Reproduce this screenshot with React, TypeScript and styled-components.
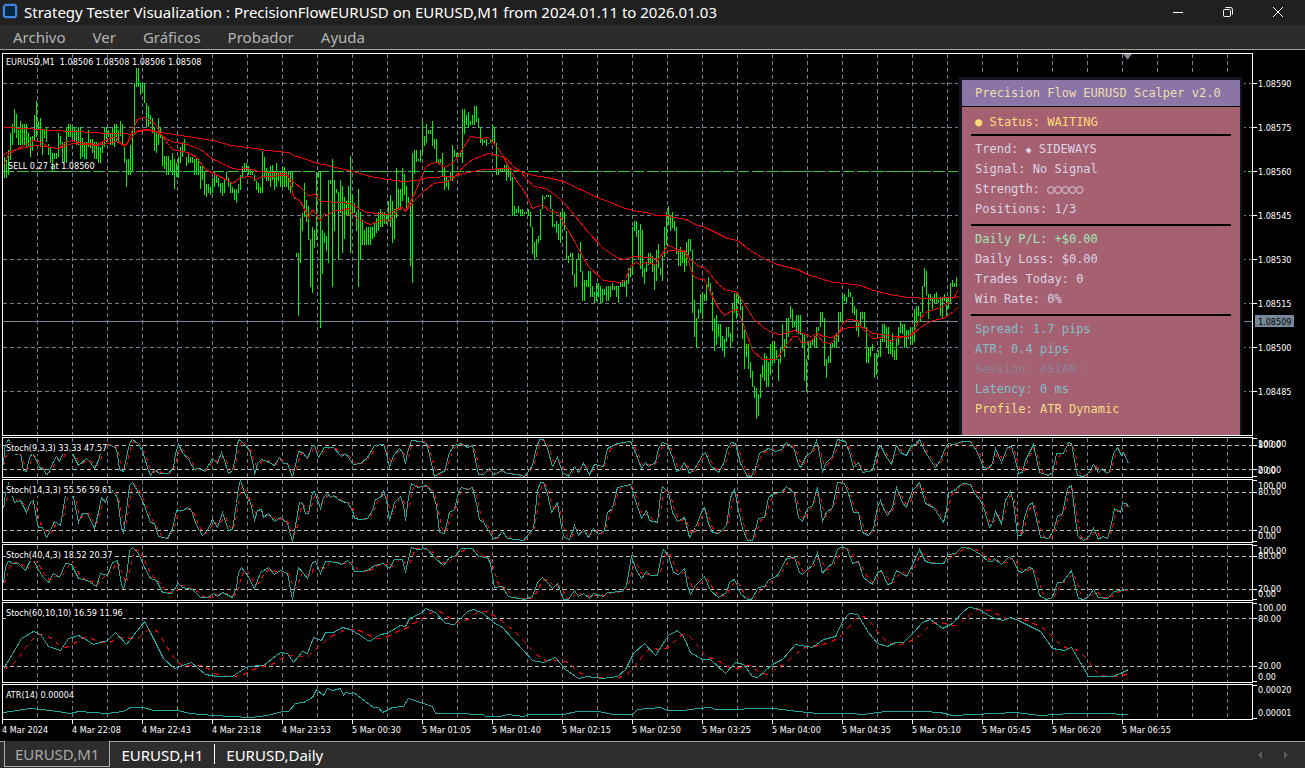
import React from 'react';
import styled, { createGlobalStyle, css } from 'styled-components';

type Point = [number, number];

const parse = (text: string): Point[] =>
  text
    .trim()
    .split(/\s+/)
    .map((pair) => pair.split(',').map(Number) as Point);

/* ---------- data: high,low of every minute bar, in chart pixels ---------- */

const BARS = parse(`
157,178 158,178 150,175 133,160 124,145 109,133 114,138 130,145 121,145 124,145
124,145 124,147 133,147 137,157 136,151 115,140 101,137 121,130 118,147 130,155
130,138 127,142 144,155 147,163 153,172 153,159 153,159 133,157 136,145 142,162
142,162 127,163 124,137 124,137 127,138 127,142 130,145 127,145 127,159 138,157
142,159 142,159 130,147 139,148 139,153 142,159 142,159 147,163 147,163 142,153
127,147 127,142 130,137 133,145 127,145 124,147 124,142 130,142 121,136 124,145
147,163 159,187 159,175 145,175 130,172 83,133 68,87 68,87 83,95 83,93
83,103 103,127 106,127 115,124 118,133 127,151 133,153 118,145 127,138 136,166
156,169 156,175 156,175 160,172 153,175 159,189 163,177 157,178 147,163 142,157
139,151 157,166 153,163 157,163 157,163 159,175 159,175 159,175 166,189 166,180
172,195 184,197 184,193 187,195 178,193 172,187 175,183 178,187 183,193 183,196
178,193 172,181 178,187 183,193 187,193 189,200 189,203 184,193 175,190 166,178
163,172 163,172 166,175 170,175 172,175 175,181 181,190 183,193 187,193 151,193
157,178 168,181 172,181 166,187 165,180 172,190 163,187 172,181 172,187 167,187
167,187 172,187 172,190 172,193 172,187 197,199 253,257 253,316 218,263 213,231
183,217 200,222 206,240 239,287 227,293 230,248 172,240 172,178 172,328 230,274
233,243 236,251 180,263 180,184 159,287 180,231 189,193 192,260 180,213 186,253
197,239 201,215 186,215 156,253 195,213 203,213 212,231 189,287 212,260 220,245
230,245 227,245 227,245 227,245 227,239 223,237 218,233 212,231 209,227 212,227
212,224 215,224 201,222 195,227 201,243 209,239 168,218 189,210 189,210 168,201
174,195 186,209 197,203 203,266 153,283 150,174 150,162 159,161 150,162 121,153
136,146 124,143 130,134 130,134 121,146 139,149 139,162 159,163 159,163 153,177
168,190 177,187 180,190 172,181 145,181 150,157 153,157 153,157 153,157 109,163
109,134 115,125 112,128 121,125 115,125 106,125 106,122 118,128 127,143 139,145
140,143 139,146 143,144 139,143 124,143 127,143 143,175 168,175 168,172 168,172
165,172 165,181 168,177 168,181 177,216 206,216 209,213 206,213 209,216 209,216
212,214 212,214 209,216 212,227 227,254 242,260 239,257 236,243 209,240 195,209
197,199 195,197 195,197 195,209 209,227 224,227 221,233 224,240 212,243 209,222
212,231 231,260 256,263 253,257 253,275 274,287 259,287 253,260 242,272 271,301
280,301 280,287 271,287 271,297 286,297 292,303 283,301 283,297 286,303 289,303
289,295 286,301 286,301 286,297 283,290 286,290 286,297 286,303 282,287 280,287
280,287 280,297 268,284 268,277 227,275 221,231 221,237 230,260 224,269 230,277
268,284 262,272 253,265 253,263 256,272 265,290 250,281 244,268 268,275 256,281
227,257 212,245 206,225 215,231 212,228 221,231 227,254 250,266 247,266 250,263
250,272 242,266 239,257 239,251 250,313 300,337 318,348 309,319 294,313 292,319
294,301 283,301 277,287 283,293 292,331 318,351 315,345 324,337 324,348 336,351
339,357 327,342 327,337 333,348 303,342 293,313 292,319 294,303 297,310 306,339
330,369 344,357 344,369 362,378 371,387 386,398 388,419 394,416 374,398 365,378
353,381 356,387 362,387 344,375 341,363 341,363 350,360 359,381 347,363 324,350
339,357 318,348 318,337 306,319 309,328 321,327 315,331 315,334 315,335 333,348
335,381 359,392 341,360 341,348 339,345 336,348 327,348 327,331 312,327 312,322
318,366 359,378 356,363 344,363 343,348 336,348 333,348 312,342 312,322 294,322
294,301 297,303 289,297 292,297 297,313 306,315 309,331 321,337 312,328 312,319
312,328 327,363 347,363 347,357 344,351 353,378 353,375 350,357 339,357 324,342
324,342 327,348 327,354 341,354 333,357 350,360 339,360 327,345 321,333 324,334
324,348 330,348 330,339 327,345 327,345 309,342 306,323 306,316 312,322 286,313
268,287 271,295 294,319 294,301 297,309 294,303 292,303 300,303 297,316 297,318
294,301 298,316 298,309 283,303 280,287 283,287 277,287
`);

const MA_SLOW = parse(`
3,128 27,129 50,131 75,132 107,134 125,134 130,135 137,132 147,131 160,133 187,137 200,139 217,142
230,146 247,148 267,151 288,153 293,156 303,159 317,164 328,166 335,168 353,172 370,177 387,180
403,182 417,181 427,178 453,177 463,174 483,170 507,169 520,172 533,176 547,178 563,182 580,190
597,198 610,203 622,208 633,211 650,214 655,216 667,216 673,218 686,220 695,225 705,228 727,239
737,241 750,251 763,259 777,265 797,270 807,275 833,283 845,284 860,286 873,291 890,295 907,298
930,299 953,298 958,297
`);
const MA_MID = parse(`
3,155 10,152 20,149 35,146 45,147 58,149 72,144 97,146 107,144 115,142 125,146 130,140 137,131
147,130 155,132 163,137 170,142 187,145 200,150 213,160 230,168 237,170 247,169 258,172 285,174
290,180 300,188 308,196 315,195 320,202 340,203 350,204 358,209 367,213 388,215 397,209 402,208
405,212 413,202 423,192 433,184 448,182 455,177 463,167 472,160 488,154 502,157 507,160 513,167
520,172 533,187 545,189 557,197 565,205 575,217 587,232 603,249 618,259 624,260 633,257 650,258
657,260 663,254 668,251 685,252 690,260 697,266 705,269 718,285 726,291 735,292 743,303 753,319
763,328 773,334 780,335 794,331 802,334 810,337 817,334 823,337 832,338 837,334 843,329 858,327
865,329 872,334 882,335 893,337 907,337 913,334 920,328 930,322 945,318 953,312 958,307
`);
const MA_FAST = parse(`
3,166 8,155 18,149 33,141 42,143 48,148 58,149 65,143 72,141 78,143 97,145 107,140 115,137 122,146
126,145 130,135 137,120 143,118 148,120 155,125 162,137 165,141 172,150 187,153 195,157 205,170
215,175 225,180 232,184 240,178 250,177 255,180 262,177 288,176 293,197 300,202 308,218 312,210
320,221 324,214 327,216 333,211 340,211 348,209 353,216 362,222 370,225 383,220 388,222 397,211
402,208 405,212 415,192 420,180 425,168 430,164 437,163 444,168 453,163 462,150 470,137 482,139
488,138 497,148 503,157 508,167 515,180 524,192 532,209 542,205 550,212 557,213 567,230 573,240
580,253 588,267 603,281 620,283 625,280 630,267 635,263 640,265 645,263 655,265 663,252 668,246
677,250 684,251 688,262 693,277 700,280 704,280 710,293 718,309 724,316 732,311 737,310 743,325
752,351 762,360 775,360 782,352 787,344 793,337 797,337 801,343 808,343 817,336 823,343 830,344
837,337 842,324 847,320 857,321 861,328 867,334 872,339 883,338 889,342 898,338 907,337 914,332
918,321 925,313 943,307 950,301 954,297 958,290
`);

const STOCH_9 = parse(`
3,28 4,11 6,5 8,2 13,11 15,17 20,16 23,33 26,34 29,20 32,16 35,21 39,30 43,32 46,37 48,36 52,26
56,19 59,24 63,15 68,8 72,16 78,28 86,21 90,25 94,31 98,23 100,16 105,6 115,10 117,16 119,32 123,34
126,20 129,6 132,2 137,6 142,13 147,30 150,38 154,32 159,36 168,36 173,30 175,16 178,7 182,15
188,22 194,32 200,31 204,34 208,28 212,21 217,26 221,15 224,23 228,36 232,33 235,20 237,6 239,2
245,8 249,13 253,28 254,37 257,26 261,22 267,24 274,28 279,20 283,26 287,26 292,40 295,28 298,14
302,15 307,21 312,8 314,8 318,20 324,10 333,10 341,19 345,16 353,27 360,26 367,20 374,8 383,7
386,16 389,30 393,18 399,11 402,15 405,26 407,15 411,3 420,4 426,6 428,13 432,31 434,39 440,35
444,34 449,15 454,8 460,6 467,10 472,8 475,23 478,37 483,37 489,31 493,37 502,33 506,36 517,37
524,39 532,28 536,10 539,2 543,2 547,11 552,29 557,20 562,35 568,39 574,29 578,35 583,26 589,37
594,27 603,29 607,11 617,6 630,4 635,15 641,31 645,25 648,29 655,25 658,11 662,5 667,7 672,20
676,34 679,33 684,25 689,36 695,30 702,18 705,15 710,28 718,35 723,26 727,11 731,5 735,6 740,26
747,39 751,39 756,28 759,16 768,11 775,14 781,12 786,5 794,12 797,25 800,30 806,18 811,15 816,3
819,16 822,35 825,26 832,19 837,2 845,4 849,15 853,30 858,25 862,35 872,33 877,13 880,8 885,18
891,27 896,8 900,15 906,18 911,8 915,7 919,2 925,15 935,30 940,23 945,10 948,6 953,7 962,4 970,4
977,15 983,30 988,31 992,26 995,11 1001,25 1007,10 1011,9 1015,23 1018,36 1022,35 1025,23 1033,7
1037,26 1039,35 1048,38 1052,35 1056,16 1063,16 1068,5 1071,6 1074,23 1077,38 1083,39 1088,36
1093,27 1098,35 1102,31 1106,36 1109,34 1113,16 1117,10 1121,18 1123,15 1128,26
`);
const STOCH_14 = parse(`
3,29 5,14 8,4 11,14 14,23 20,21 26,33 30,23 33,21 35,34 38,48 42,48 46,58 50,51 54,42 60,46 63,28
66,9 72,13 78,43 82,34 87,34 94,49 98,33 101,18 105,23 110,9 117,18 121,49 123,53 126,31 129,6
132,3 138,13 144,26 150,43 154,44 158,57 167,59 172,49 176,31 183,31 187,28 191,31 196,46 202,56
207,51 212,40 217,48 222,33 228,51 232,50 236,24 238,8 240,1 245,16 250,23 254,41 257,31 261,30
263,38 268,34 274,42 280,38 287,44 292,62 295,46 299,23 302,24 305,34 308,34 312,13 314,12 320,29
323,18 327,14 330,18 333,16 341,22 347,23 352,31 354,39 360,40 367,39 372,31 375,20 380,18 383,12
386,21 389,41 394,23 400,17 403,26 405,41 408,18 411,4 417,8 426,6 432,13 436,26 439,53 444,54
449,33 454,30 458,13 461,8 467,10 472,8 476,24 479,40 483,43 488,51 493,59 497,58 502,52 507,59
523,61 533,49 537,11 540,3 543,3 547,14 551,33 557,23 561,48 564,58 569,60 574,46 578,56 583,50
588,58 593,49 598,55 604,51 607,33 612,29 617,8 630,5 635,21 641,39 646,31 649,41 657,43 660,16
662,7 668,13 672,33 677,42 684,38 689,58 695,48 701,33 704,28 708,44 712,53 718,54 726,46 730,18
734,10 738,31 742,49 747,61 752,61 758,39 764,38 768,18 773,14 781,13 786,7 794,14 798,38 802,42
807,29 812,26 817,8 819,21 822,42 826,33 832,28 837,3 844,4 848,14 853,33 858,33 862,53 868,56
873,49 877,28 880,21 883,29 887,36 892,28 896,8 902,23 906,28 912,11 915,8 919,3 925,24 933,28
943,43 946,31 948,14 955,10 962,4 970,5 974,14 980,21 984,31 989,48 992,44 995,32 1001,44 1005,21
1010,12 1013,23 1017,56 1021,56 1024,38 1028,26 1032,23 1037,44 1040,58 1048,59 1053,51 1057,37
1062,34 1067,9 1071,6 1074,31 1077,56 1083,61 1088,58 1093,49 1098,60 1102,57 1107,59 1111,44
1114,29 1120,33 1122,24 1126,24 1128,28
`);
const STOCH_40 = parse(`
3,39 5,23 8,16 12,19 18,19 25,26 30,16 33,15 37,24 43,33 48,38 53,29 59,33 65,19 71,20 78,34 87,36
96,42 100,29 107,31 112,18 117,16 121,41 123,44 126,33 129,6 132,3 138,9 144,23 150,34 156,36
162,48 171,49 178,39 182,43 192,45 200,53 207,53 213,49 217,52 222,48 232,53 236,43 238,28 241,23
247,31 254,44 260,28 268,23 274,30 280,26 287,29 292,55 295,39 298,23 307,34 312,18 315,17 320,29
325,17 337,18 341,20 347,16 352,21 354,27 360,27 367,26 374,21 383,19 389,24 394,15 402,15 405,28
408,14 411,3 417,5 426,4 435,14 443,21 449,13 454,12 461,4 472,4 478,12 487,13 490,19 494,43 502,42
508,52 524,55 532,52 537,38 542,33 547,38 552,44 557,39 563,55 568,55 574,46 578,52 583,49 589,54
593,49 603,52 607,48 622,47 626,41 631,12 636,26 641,34 646,27 650,31 657,31 661,11 663,5 668,11
673,28 678,30 684,24 687,41 690,50 695,41 704,32 710,46 718,53 726,48 729,38 734,35 740,49 747,55
751,55 758,43 764,42 768,36 777,31 786,14 794,13 799,28 802,30 807,25 812,21 817,8 822,29 827,23
832,19 837,5 842,2 847,5 852,19 858,17 863,33 872,40 877,28 881,26 887,40 891,39 896,26 906,32
911,23 919,5 925,17 933,19 943,19 948,10 955,9 961,3 970,4 980,10 988,17 992,17 994,14 1001,20
1009,12 1013,16 1018,27 1022,28 1028,23 1032,24 1036,38 1039,51 1046,55 1052,53 1057,38 1062,38
1071,26 1075,43 1078,54 1084,55 1088,52 1093,45 1098,53 1107,54 1114,47 1120,46 1128,45
`);
const STOCH_60 = parse(`
3,66 10,55 21,36 33,29 40,32 48,44 60,48 68,36 78,33 87,38 93,42 107,38 115,30 126,42 133,33 144,19
150,30 163,56 174,66 191,60 205,72 217,74 232,74 247,64 263,63 280,50 287,51 293,60 302,49 307,51
313,35 321,38 325,30 333,30 342,25 350,27 360,33 369,39 378,33 388,30 400,23 405,24 409,16 422,10
425,6 435,10 445,21 454,22 467,9 473,7 483,11 493,20 502,25 512,36 532,58 543,60 555,55 565,67
578,76 587,74 602,76 617,74 625,67 633,51 644,41 655,53 668,33 677,28 683,34 690,50 702,57 710,57
725,71 735,60 743,62 752,74 757,75 772,62 782,57 795,42 812,45 823,37 835,34 843,17 849,11 857,12
868,30 877,41 887,44 895,40 903,40 913,30 922,20 930,17 942,26 952,21 963,9 968,5 977,6 992,15
1002,18 1010,15 1018,18 1040,29 1052,46 1064,48 1071,45 1077,55 1088,74 1112,74 1120,71 1128,67
`);
const ATR_14 = parse(`
3,28 30,24 50,26 70,29 78,27 107,29 123,27 130,23 143,23 153,26 177,26 190,29 213,31 250,33 267,31
282,27 288,27 295,19 303,18 312,13 316,5 323,11 327,4 332,6 340,4 343,11 345,8 350,9 353,8 357,11
365,17 373,23 378,23 382,28 392,23 403,22 408,14 432,22 435,29 453,29 483,30 485,32 500,32 507,30
523,32 528,30 563,30 577,27 598,27 613,30 632,30 637,25 660,23 667,26 683,26 697,24 710,23 715,25
773,24 797,27 818,29 850,29 863,30 885,27 923,27 940,28 952,31 973,30 1015,28 1040,31 1070,29
1103,29 1128,30
`);

/* ---------- chart geometry ---------- */

const PLOT_LEFT = 3;
const MAIN_TOP = 54;
const BAR_STEP = 2;
const GRID_X = Array.from({ length: 60 }, (_, i) => 34 + i * 35);
const PRICES = ['1.08590', '1.08575', '1.08560', '1.08545', '1.08530', '1.08515', '1.08500', '1.08485'];
const PRICE_Y = (i: number) => 83 + i * 44 - MAIN_TOP;

const valueAt = (line: Point[], x: number) => {
  const i = line.findIndex(([px]) => px >= x);
  if (i <= 0) return line[i === 0 ? 0 : line.length - 1][1];
  const [x0, y0] = line[i - 1];
  const [x1, y1] = line[i];
  return y0 + ((y1 - y0) * (x - x0)) / (x1 - x0);
};

/* the signal line: a simple moving average of the main line */
const average = (line: Point[], bars: number): Point[] => {
  const out: Point[] = [];
  for (let x = 3; x <= 1128; x += BAR_STEP) {
    let sum = 0;
    for (let k = 0; k < bars; k += 1) sum += valueAt(line, x - k * BAR_STEP);
    out.push([x, Math.round(sum / bars)]);
  }
  return out;
};

const toPoints = (line: Point[], top = 0) =>
  line.map(([x, y]) => `${x - PLOT_LEFT + 0.5},${y - top - 0.5}`).join(' ');

/* ---------- styles ---------- */

const GlobalStyle = createGlobalStyle`
  * { box-sizing: border-box; }
  body { margin: 0; background: #000; }
  button { font: inherit; border: 0; background: none; padding: 0; }
`;

const uiFont = css`
  font-family: 'Noto Sans', 'Open Sans', sans-serif;
`;
const chartFont = css`
  font-family: 'DejaVu Sans Condensed', 'DejaVu Sans', sans-serif;
  font-stretch: condensed;
  font-size: 9px;
`;

const Window = styled.div`
  min-height: 100vh;
  display: flex;
  flex-direction: column;
  background: #000;
  ${uiFont}
`;

const TitleBar = styled.header`
  height: 25px;
  display: flex;
  align-items: flex-start;
  padding: 0 2px;
  background: #202020;
  color: #fff;
`;

const Logo = styled.svg`
  margin-top: 3px;
`;

const Title = styled.h1`
  flex: 1;
  margin: 0 0 0 6px;
  font-size: 15px;
  line-height: 24px;
  font-weight: 400;
  white-space: nowrap;
  overflow: hidden;
`;

const WindowButton = styled.button`
  width: 50px;
  height: 23px;
  display: flex;
  align-items: center;
  justify-content: center;
`;

const MenuBar = styled.nav`
  height: 25px;
  display: flex;
  gap: 27px;
  padding: 0 13px;
  background: #2b2b2b;
  border-bottom: 1px solid #a0a0a0;
`;

const MenuItem = styled.button`
  color: #b4b4b4;
  font-size: 15px;
  line-height: 24px;
`;

const Workspace = styled.main`
  flex: 1;
  display: flex;
  flex-direction: column;
  gap: 1px;
  padding: 3px 0 0 2px;
  background: #000;
`;

const Pane = styled.section<{ $height: number; $grow?: boolean }>`
  flex: ${(p) => (p.$grow ? 1 : 0)} 0 ${(p) => p.$height}px;
  min-height: ${(p) => p.$height}px;
  display: flex;
`;

const Plot = styled.div`
  position: relative;
  flex: 1;
  min-width: 0;
  display: flex;
  border: 1px solid #fff;
  overflow: hidden;
`;

const Drawing = styled.svg`
  flex: 1;
  width: 100%;
  min-width: 0;
  display: block;
  ${chartFont}
`;

const Scale = styled.svg`
  width: 52px;
  flex: none;
  display: block;
  ${chartFont}
  fill: #fff;
`;

const PaneLabel = styled.span<{ $solid?: boolean }>`
  position: absolute;
  top: ${(p) => (p.$solid ? 5 : 3)}px;
  left: 3px;
  ${chartFont}
  line-height: 11px;
  color: #fff;
  white-space: pre;
  background: ${(p) => (p.$solid ? '#000' : 'transparent')};
`;

const TimeAxis = styled.ol`
  ${chartFont}
  height: 21px;
  margin: -1px 0 0;
  padding: 0;
  display: flex;
  list-style: none;
  overflow: hidden;
  color: #fff;
`;

const TimeTick = styled.li`
  flex: 0 0 70px;
  white-space: nowrap;
  line-height: 12px;
  &::before {
    content: '';
    display: block;
    width: 1px;
    height: 4px;
    background: #fff;
  }
`;

const Dashboard = styled.aside`
  position: absolute;
  top: 21px;
  right: 8px;
  bottom: 0;
  width: 286px;
  padding: 2px 2px 0 1px;
  background: #000;
  font-family: 'DejaVu Sans Mono', 'Liberation Mono', monospace;
  font-size: 12px;
`;

const DashboardFrame = styled.div`
  height: 100%;
  display: flex;
  flex-direction: column;
  padding: 3px 2px 0 2px;
  background: #161420;
`;

const DashboardTitle = styled.h2`
  margin: 0 0 1px 1px;
  padding: 0 13px;
  font-size: inherit;
  font-weight: 400;
  line-height: 26px;
  color: #f0deae;
  background: #8a75a6;
  white-space: nowrap;
  box-shadow: 0 1px 0 #000;
`;

const DashboardBody = styled.div`
  flex: 1;
  margin-left: 1px;
  padding-top: 5px;
  background: #a56072;
`;

const Row = styled.p<{ $color: string }>`
  height: 20px;
  margin: 0;
  padding: 0 13px;
  line-height: 20px;
  color: ${(p) => p.$color};
  white-space: pre;
`;

const Glyph = styled.span`
  font-size: 10px;
  line-height: 1;
`;

const Divider = styled.hr<{ $tight?: boolean }>`
  height: 2px;
  margin: ${(p) => (p.$tight ? 2 : 5)}px 9px 3px;
  border: 0;
  background: #000;
`;

const TabBar = styled.footer`
  height: 27px;
  display: flex;
  align-items: flex-start;
  background: #2d2d2d;
  border-top: 1px solid #a0a0a0;
`;

const Tab = styled.button<{ $active?: boolean }>`
  height: 25px;
  padding: 0 11px;
  font-size: 15px;
  line-height: 26px;
  color: #fff;
  ${(p) =>
    p.$active &&
    css`
      margin: -1px 0 0 4px;
      height: 26px;
      padding: 0 10px;
      border: 1px solid #b0b0b0;
      border-top: 0;
      background: #2d2d2d;
      color: #a8a8a8;
    `}
`;

const TabSeparator = styled.span`
  width: 1px;
  height: 20px;
  margin-top: 2px;
  background: #fff;
`;

const Scroller = styled.div`
  margin-left: auto;
  display: flex;
  padding: 0 6px 0 0;
`;

const ScrollButton = styled.button`
  width: 26px;
  height: 25px;
  display: flex;
  align-items: center;
  justify-content: center;
`;

/* ---------- chart parts ---------- */

const GridColumns = () => (
  <g stroke="#708090" strokeDasharray="4 3" shapeRendering="crispEdges">
    {GRID_X.map((x) => (
      <line key={x} x1={x + 0.5} x2={x + 0.5} y1="0" y2="100%" />
    ))}
  </g>
);

const MainDrawing = () => (
  <Drawing height="100%" role="img" aria-label="EURUSD one minute bars">
    <GridColumns />
    <g shapeRendering="crispEdges" fill="none">
      {PRICES.map((p, i) => (
        <line key={p} x1="0" x2="100%" y1={PRICE_Y(i) + 0.5} y2={PRICE_Y(i) + 0.5} stroke="#708090" strokeDasharray="4 3" />
      ))}
      <line x1="0" x2="100%" y1="267.5" y2="267.5" stroke="#778899" />
      {BARS.map(([high, low], i) => (
        <rect key={i} x={1 + i * BAR_STEP} y={high - MAIN_TOP} width="1" height={low - high} fill="#00f400" />
      ))}
      <line x1="0" x2="100%" y1="117.5" y2="117.5" stroke="#32cd32" strokeDasharray="11 4" />
      <g stroke="#f00000">
        <polyline points={toPoints(MA_SLOW, MAIN_TOP)} />
        <polyline points={toPoints(MA_MID, MAIN_TOP)} />
        <polyline points={toPoints(MA_FAST, MAIN_TOP)} />
      </g>
    </g>
    <path d="M1120 0h9l-4 5h-1z" fill="#778899" />
    <text x="5" y="115" fill="#fff">SELL 0.27 at 1.08560</text>
  </Drawing>
);

type Indicator = {
  label: string;
  height: number;
  line: Point[];
  smooth?: number;
  levels: number[];
  ticks: [string, number][];
};

const INDICATORS: Indicator[] = [
  { label: 'Stoch(9,3,3) 33.33 47.57', height: 41, line: STOCH_9, smooth: 3, levels: [8, 32], ticks: [['100.00', 7], ['80.00', 8], ['20.00', 33], ['0.00', 34]] },
  { label: 'Stoch(14,3,3) 55.56 59.61', height: 64, line: STOCH_14, smooth: 3, levels: [13, 51], ticks: [['100.00', 7], ['80.00', 13], ['20.00', 51], ['0.00', 57]] },
  { label: 'Stoch(40,4,3) 18.52 20.37', height: 57, line: STOCH_40, smooth: 4, levels: [12, 45], ticks: [['100.00', 7], ['80.00', 12], ['20.00', 45], ['0.00', 50]] },
  { label: 'Stoch(60,10,10) 16.59 11.96', height: 81, line: STOCH_60, smooth: 10, levels: [16, 64], ticks: [['100.00', 6], ['80.00', 17], ['20.00', 64], ['0.00', 75]] },
  { label: 'ATR(14) 0.00004', height: 36, line: ATR_14, levels: [], ticks: [['0.00020', 6], ['0.00001', 29]] },
];

const IndicatorPane = ({ label, height, line, smooth, levels, ticks }: Indicator) => (
  <Pane $height={height} aria-label={label}>
    <Plot>
      <Drawing height={height - 2} aria-hidden="true">
        <GridColumns />
        <g shapeRendering="crispEdges" fill="none">
          {levels.map((y) => (
            <line key={y} x1="0" x2="100%" y1={y - 0.5} y2={y - 0.5} stroke="#c0c0c0" strokeDasharray="4 3" />
          ))}
          {smooth && <polyline points={toPoints(average(line, smooth))} stroke="#f00000" strokeDasharray={smooth > 4 ? '5 5' : '4 4'} />}
          <polyline points={toPoints(line)} stroke="#20a89e" />
        </g>
      </Drawing>
      <PaneLabel $solid>{label}</PaneLabel>
    </Plot>
    <Scale height={height} aria-hidden="true">
      {[1, ...levels, height - 2].map((y) => (
        <rect key={y} x="0" y={y} width="4" height="1" />
      ))}
      {ticks.map(([text, y]) => (
        <text key={text} x="5" y={y + 3}>{text}</text>
      ))}
    </Scale>
  </Pane>
);

const TIMES = [
  '4 Mar 2024', '4 Mar 22:08', '4 Mar 22:43', '4 Mar 23:18', '4 Mar 23:53', '5 Mar 00:30',
  '5 Mar 01:05', '5 Mar 01:40', '5 Mar 02:15', '5 Mar 02:50', '5 Mar 03:25', '5 Mar 04:00',
  '5 Mar 04:35', '5 Mar 05:10', '5 Mar 05:45', '5 Mar 06:20', '5 Mar 06:55',
];

const TEXT = '#dcd3e4';
const CYAN = '#82bfc9';

export default function App() {
  return (
    <Window>
      <GlobalStyle />
      <TitleBar>
        <Logo width="16" height="18" viewBox="0 0 16 18" aria-hidden="true">
          <path d="M4 0v16M7 0v16M10 0v16M13 0v16M0 4h16M0 7h16M0 10h16M0 13h16" stroke="#2f5f9e" strokeWidth="1" />
          <rect x="2" y="2" width="12" height="12" rx="2" fill="#04263f" stroke="#3f86e0" strokeWidth="2" />
        </Logo>
        <Title>Strategy Tester Visualization : PrecisionFlowEURUSD on EURUSD,M1 from 2024.01.11 to 2026.01.03</Title>
        <WindowButton aria-label="Minimize">
          <svg width="12" height="12" viewBox="0 0 12 12"><path d="M1 6.500h10" stroke="#fff" /></svg>
        </WindowButton>
        <WindowButton aria-label="Restore">
          <svg width="12" height="12" viewBox="0 0 12 12" fill="none" stroke="#fff">
            <rect x="1.500" y="3.500" width="7" height="7" rx="1" />
            <path d="M3.500 1.500H8.500a2 2 0 0 1 2 2V8.500" />
          </svg>
        </WindowButton>
        <WindowButton aria-label="Close">
          <svg width="12" height="12" viewBox="0 0 12 12"><path d="M1 1l10 10M11 1L1 11" stroke="#fff" /></svg>
        </WindowButton>
      </TitleBar>
      <MenuBar>
        {['Archivo', 'Ver', 'Gráficos', 'Probador', 'Ayuda'].map((m) => (
          <MenuItem key={m}>{m}</MenuItem>
        ))}
      </MenuBar>

      <Workspace>
        <Pane $height={383} $grow>
          <Plot>
            <MainDrawing />
            <PaneLabel>EURUSD,M1  1.08506 1.08508 1.08506 1.08508</PaneLabel>
            <Dashboard>
              <DashboardFrame>
                <DashboardTitle>Precision Flow EURUSD Scalper v2.0</DashboardTitle>
                <DashboardBody>
                  <Row $color="#fddc77">● Status: WAITING</Row>
                  <Divider $tight />
                  <Row $color={TEXT}>Trend: <Glyph>◆</Glyph> SIDEWAYS</Row>
                  <Row $color={TEXT}>Signal: No Signal</Row>
                  <Row $color={TEXT}>Strength: ○○○○○</Row>
                  <Row $color={TEXT}>Positions: 1/3</Row>
                  <Divider />
                  <Row $color="#a0e8b4">Daily P/L: +$0.00</Row>
                  <Row $color={TEXT}>Daily Loss: $0.00</Row>
                  <Row $color={TEXT}>Trades Today: 0</Row>
                  <Row $color={TEXT}>Win Rate: 0%</Row>
                  <Divider />
                  <Row $color={CYAN}>Spread: 1.7 pips</Row>
                  <Row $color={CYAN}>ATR: 0.4 pips</Row>
                  <Row $color="#8c8098">Session: ASIAN <Glyph>☾</Glyph></Row>
                  <Row $color={CYAN}>Latency: 0 ms</Row>
                  <Row $color="#f5dd83">Profile: ATR Dynamic</Row>
                </DashboardBody>
              </DashboardFrame>
            </Dashboard>
          </Plot>
          <Scale height="383" aria-hidden="true">
            {PRICES.map((p, i) => (
              <g key={p}>
                <rect x="0" y={PRICE_Y(i) + 1} width="4" height="1" />
                <text x="5" y={PRICE_Y(i) + 5}>{p}</text>
              </g>
            ))}
            <rect x="2" y="262" width="39" height="12" fill="#778899" />
            <text x="5" y="272" fill="#000">1.08509</text>
          </Scale>
        </Pane>
        {INDICATORS.map((indicator) => (
          <IndicatorPane key={indicator.label} {...indicator} />
        ))}
        <TimeAxis>
          {TIMES.map((t) => (
            <TimeTick key={t}>{t}</TimeTick>
          ))}
        </TimeAxis>
      </Workspace>

      <TabBar>
        <Tab $active>EURUSD,M1</Tab>
        <Tab>EURUSD,H1</Tab>
        <TabSeparator />
        <Tab>EURUSD,Daily</Tab>
        <Scroller>
          <ScrollButton aria-label="Scroll tabs left">
            <svg width="6" height="8" viewBox="0 0 6 8"><path d="M5 0v8L1 4z" fill="#5c5c5c" /></svg>
          </ScrollButton>
          <ScrollButton aria-label="Scroll tabs right">
            <svg width="6" height="8" viewBox="0 0 6 8"><path d="M1 0v8l4-4z" fill="#5c5c5c" /></svg>
          </ScrollButton>
        </Scroller>
      </TabBar>
    </Window>
  );
}
